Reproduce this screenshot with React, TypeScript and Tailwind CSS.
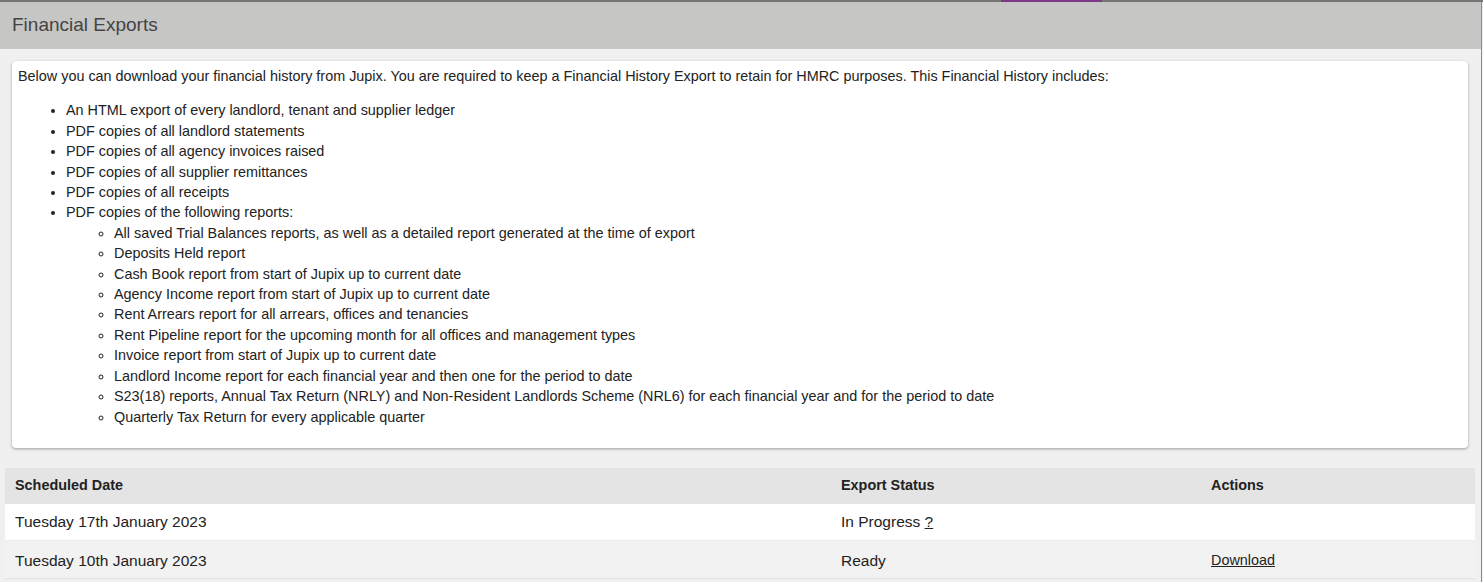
export default function App() {
  const reports = [
    "All saved Trial Balances reports, as well as a detailed report generated at the time of export",
    "Deposits Held report",
    "Cash Book report from start of Jupix up to current date",
    "Agency Income report from start of Jupix up to current date",
    "Rent Arrears report for all arrears, offices and tenancies",
    "Rent Pipeline report for the upcoming month for all offices and management types",
    "Invoice report from start of Jupix up to current date",
    "Landlord Income report for each financial year and then one for the period to date",
    "S23(18) reports, Annual Tax Return (NRLY) and Non-Resident Landlords Scheme (NRL6) for each financial year and for the period to date",
    "Quarterly Tax Return for every applicable quarter",
  ];

  return (
    <div
      className="w-[1483px] h-[582px] overflow-hidden bg-[#f0f0f0] text-[#222]"
      style={{ fontFamily: '"Liberation Sans", Arial, sans-serif' }}
    >
      {/* top strip */}
      <div className="flex h-[2px] bg-[#767676]">
        <div className="w-[1001px]" />
        <div className="w-[101px] bg-[#7a3a88]" />
      </div>

      <div className="flex h-[580px]">
        <div className="flex-1 flex flex-col">
          {/* Header */}
          <div className="h-[47px] bg-[#c6c6c4] flex items-center pl-[12px]">
            <h1 className="text-[19px] text-[#444] font-normal">Financial Exports</h1>
          </div>

          {/* Info card */}
          <div className="mt-[12px] ml-[12px] mr-[13px] bg-white rounded-[4px] shadow-[0_1px_3px_rgba(0,0,0,0.35)] pt-[5px] pb-[7px] px-[6px] text-[14.4px] leading-[20.4px]">
            <p>
              Below you can download your financial history from Jupix. You are required to keep a Financial History
              Export to retain for HMRC purposes. This Financial History includes:
            </p>
            <ul className="list-disc pl-[48px] my-[14px]">
              <li>An HTML export of every landlord, tenant and supplier ledger</li>
              <li>PDF copies of all landlord statements</li>
              <li>PDF copies of all agency invoices raised</li>
              <li>PDF copies of all supplier remittances</li>
              <li>PDF copies of all receipts</li>
              <li>
                PDF copies of the following reports:
                <ul className="list-[circle] pl-[48px]">
                  {reports.map((r) => (
                    <li key={r}>{r}</li>
                  ))}
                </ul>
              </li>
            </ul>
          </div>

          {/* Exports table */}
          <table className="mt-[20px] ml-[5px] w-[1470px] border-collapse text-left">
            <thead>
              <tr className="bg-[#e4e4e4] h-[36px]">
                <th className="w-[826px] px-[10px] text-[14.4px] font-bold">Scheduled Date</th>
                <th className="w-[370px] px-[10px] text-[14.4px] font-bold">Export Status</th>
                <th className="px-[10px] text-[14.4px] font-bold">Actions</th>
              </tr>
            </thead>
            <tbody className="text-[15.5px]">
              <tr className="bg-white h-[37px] border-b border-[#ececec]">
                <td className="px-[10px] pb-[2px]">Tuesday 17th January 2023</td>
                <td className="px-[10px] pb-[2px]">
                  In Progress <a className="underline cursor-help">?</a>
                </td>
                <td className="px-[10px]" />
              </tr>
              <tr className="bg-[#f2f2f2] h-[38px] border-b border-[#e2e2e2]">
                <td className="px-[10px] pt-[2px]">Tuesday 10th January 2023</td>
                <td className="px-[10px] pt-[2px]">Ready</td>
                <td className="px-[10px] pt-[2px] text-[14.4px]">
                  <a href="#" className="underline text-[#222]">
                    Download
                  </a>
                </td>
              </tr>
            </tbody>
          </table>
        </div>
        <div className="w-px bg-[#8c8c8c]" />
        <div className="w-px bg-[#f0f0f0]" />
      </div>
    </div>
  );
}
